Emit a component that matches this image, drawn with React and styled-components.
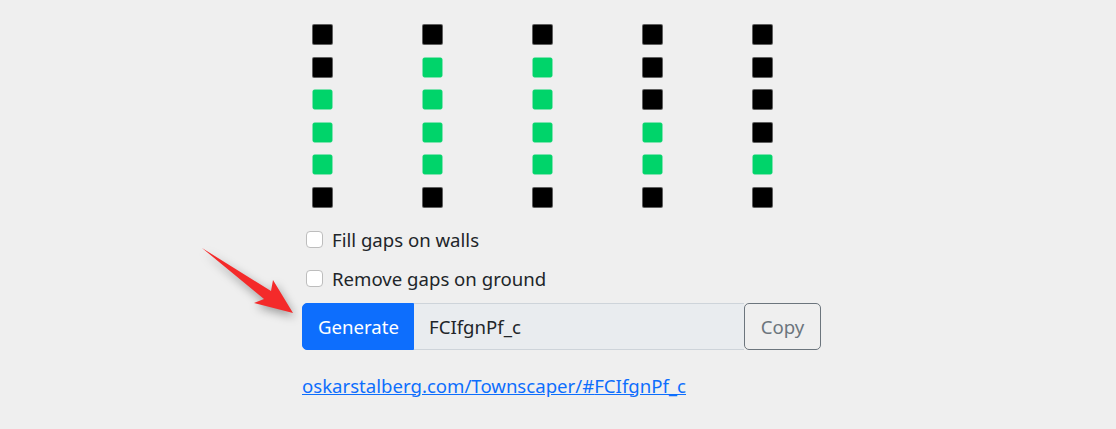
import React from 'react'
import styled, { createGlobalStyle } from 'styled-components'

const GlobalStyle = createGlobalStyle`
  html, body {
    margin: 0;
    padding: 0;
    background: #efefef;
  }
  body {
    font-family: "Noto Sans", "Open Sans", sans-serif;
    color: #212529;
  }
`

const pattern = [
  'BBGGGB',
  'BGGGGB',
  'BGGGGB',
  'BBBGGB',
  'BBBBGB',
]

const App = () => {
  const code = 'FCIfgnPf_c'
  return (
    <>
      <GlobalStyle />
      <Page>
        <Content>
          <Grid>
            {pattern.map((col, i) => (
              <Column key={i}>
                {col.split('').map((c, j) => (
                  <Cell key={j} $on={c === 'G'} />
                ))}
              </Column>
            ))}
          </Grid>

          <Check>
            <Box type="checkbox" />
            <span>Fill gaps on walls</span>
          </Check>
          <Check>
            <Box type="checkbox" />
            <span>Remove gaps on ground</span>
          </Check>

          <InputGroup>
            <PrimaryBtn>Generate</PrimaryBtn>
            <Field readOnly value={code} />
            <OutlineBtn>Copy</OutlineBtn>
          </InputGroup>

          <LinkText href="#">oskarstalberg.com/Townscaper/#{code}</LinkText>
        </Content>

        {/* red annotation arrow pointing at the Generate button */}
        <Arrow viewBox="0 0 110 80" width="110" height="80">
          <path d="M1 2 L70 45 L72 34 L92 67 L53 57 L63 53 Z" fill="#f42a2a" />
        </Arrow>
      </Page>
    </>
  )
}

export default App

const Page = styled.div`
  position: relative;
  width: 1116px;
  height: 429px;
  overflow: hidden;
`

const Content = styled.div`
  margin-left: 302px;
  width: 519px;
  padding-top: 24px;
`

const Grid = styled.div`
  display: flex;
  gap: 89px;
  padding-left: 10px;
`

const Column = styled.div`
  display: flex;
  flex-direction: column;
  gap: 11.5px;
`

const Cell = styled.div`
  width: 21px;
  height: 21px;
  box-sizing: border-box;
  border-radius: 2px;
  background: ${p => (p.$on ? '#00d46a' : '#000')};
  border: 1px solid ${p => (p.$on ? '#00d46a' : 'rgba(120,120,120,0.8)')};
  ${p => p.$on && 'transform: scale(0.95);'}
`

const Check = styled.label`
  display: flex;
  align-items: center;
  gap: 9px;
  padding-left: 4px;
  font-size: 18.6px;
  line-height: 30px;
  margin-top: 17px;
  & + & {
    margin-top: 9px;
  }
`

const Box = styled.input`
  appearance: none;
  margin: 0;
  width: 17px;
  height: 17px;
  box-sizing: border-box;
  background: #fff;
  border: 1px solid #bdbdbd;
  border-radius: 4px;
`

const InputGroup = styled.div`
  display: flex;
  margin-top: 9px;
  height: 47px;
`

const PrimaryBtn = styled.button`
  font: inherit;
  font-size: 18.6px;
  color: #fff;
  background: #0d6efd;
  border: 1px solid #0d6efd;
  border-radius: 5px 0 0 5px;
  padding: 0 15px;
  width: 112px;
`

const Field = styled.input`
  font: inherit;
  font-size: 18.6px;
  color: #212529;
  background: #e9ecef;
  border: 1px solid #ced4da;
  border-left: none;
  border-right: none;
  padding: 0 15px;
  flex: 1;
  min-width: 0;
  outline: none;
`

const OutlineBtn = styled.button`
  font: inherit;
  font-size: 18.6px;
  color: #6c757d;
  background: transparent;
  border: 1px solid #6c757d;
  border-radius: 5px;
  width: 77px;
`

const LinkText = styled.a`
  display: inline-block;
  margin-top: 23px;
  font-size: 18.6px;
  color: #0d6efd;
  text-decoration: underline;
`

const Arrow = styled.svg`
  position: absolute;
  left: 201px;
  top: 246px;
  filter: drop-shadow(2px 4px 5px rgba(0, 0, 0, 0.35));
`
